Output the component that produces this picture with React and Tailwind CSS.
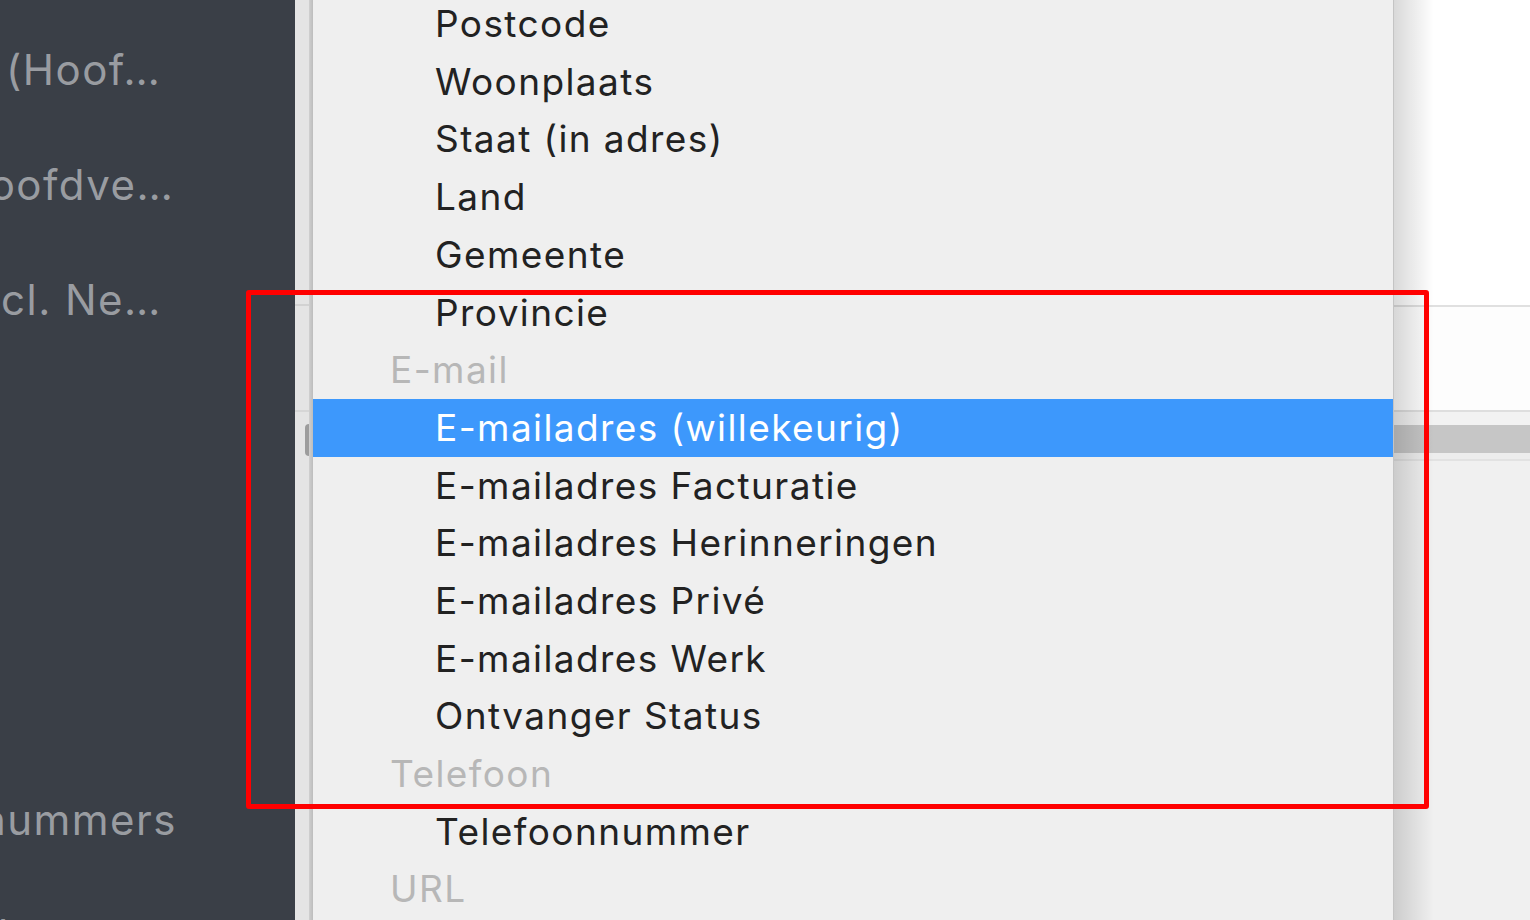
import React from "react";

const rows = [
  { t: "Postcode" },
  { t: "Woonplaats" },
  { t: "Staat (in adres)" },
  { t: "Land" },
  { t: "Gemeente" },
  { t: "Provincie" },
  { t: "E-mail", h: true },
  { t: "E-mailadres (willekeurig)", s: true },
  { t: "E-mailadres Facturatie" },
  { t: "E-mailadres Herinneringen" },
  { t: "E-mailadres Privé" },
  { t: "E-mailadres Werk" },
  { t: "Ontvanger Status" },
  { t: "Telefoon", h: true },
  { t: "Telefoonnummer" },
  { t: "URL", h: true },
];

export default function App() {
  return (
    <div
      className="relative flex h-[920px] w-[1530px] overflow-hidden bg-[#efefef]"
      style={{ fontFamily: "Inter, 'Liberation Sans', sans-serif" }}
    >
      {/* dark sidebar */}
      <aside className="flex w-[295px] shrink-0 flex-col overflow-hidden bg-[#3a3f47] text-[42px] leading-none tracking-[0.035em] text-[#999ca1]">
        <div className="mt-[12px] flex h-[115px] shrink-0 items-center whitespace-nowrap pl-[6px]">(Hoof…</div>
        <div className="flex h-[115px] shrink-0 items-center whitespace-nowrap -ml-[43px]">Hoofdve…</div>
        <div className="flex h-[115px] shrink-0 items-center whitespace-nowrap -ml-[38px]">Incl. Ne…</div>
        <div className="h-[405px] shrink-0" />
        <div className="flex h-[115px] shrink-0 items-center whitespace-nowrap -ml-[19px]">nummers</div>
        <div className="flex h-[115px] shrink-0 items-center whitespace-nowrap -ml-[2px]">
          <span>l</span>
          <span className="ml-[62px]">t</span>
        </div>
      </aside>

      {/* background window strip left of menu */}
      <div className="flex w-[18px] shrink-0">
        <div className="flex w-[14px] flex-col bg-[#e4e4e4]">
          <div className="h-[304px]" />
          <div className="h-[2px] bg-[#d2d2d2]" />
          <div className="h-[104px]" />
          <div className="h-[2px] bg-[#d6d6d6]" />
          <div className="h-[12px]" />
          <div className="ml-[10px] h-[32px] rounded-l-full bg-[#9c9c9c]" />
        </div>
        <div className="w-[4px] bg-gradient-to-r from-[#cfcfcf] to-[#bdbdbd]" />
      </div>

      {/* menu */}
      <div className="flex w-[1080px] shrink-0 flex-col bg-[#efefef] -mt-[5px]">
        {rows.map((r) => (
          <div
            key={r.t}
            className={
              "flex h-[57.7px] shrink-0 items-center whitespace-nowrap text-[37px] tracking-[0.038em] " +
              (r.s ? "bg-[#3d98fc] text-white " : "") +
              (r.h ? "pl-[77px] text-[#b7b7b7]" : r.s ? "pl-[122px]" : "pl-[122px] text-[#222222]")
            }
          >
            {r.t}
          </div>
        ))}
      </div>

      {/* background window right of menu */}
      <div className="relative flex flex-1 border-l border-[#c4c4c4]">
        <div className="flex flex-1 flex-col">
          <div className="h-[305px] bg-white" />
          <div className="h-[2px] bg-[#e0e0e0]" />
          <div className="h-[103px] bg-[#fdfdfd]" />
          <div className="h-[2px] bg-[#dedede]" />
          <div className="h-[13px] bg-[#f2f2f2]" />
          <div className="h-[28px] bg-[#c6c6c6]" />
          <div className="h-[6px] bg-[#ededed]" />
          <div className="h-[2px] bg-[#e2e2e2]" />
          <div className="flex-1 bg-[#f0f0f0]" />
        </div>
        <div className="pointer-events-none absolute inset-y-0 left-0 w-[40px] bg-gradient-to-r from-black/15 to-transparent" />
      </div>

      {/* red annotation box */}
      <div className="pointer-events-none absolute left-[246px] top-[290px] h-[519px] w-[1183px] rounded-[3px] border-[5px] border-[#ff0000]" />
    </div>
  );
}
